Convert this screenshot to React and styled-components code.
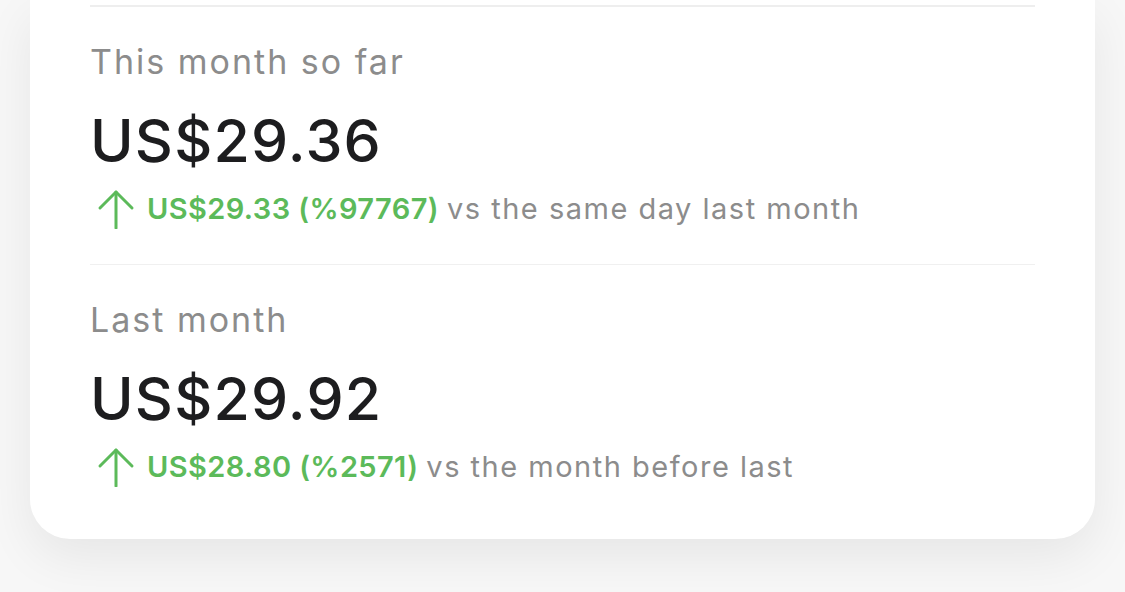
import styled, { createGlobalStyle } from "styled-components";

const GlobalStyle = createGlobalStyle`
  html, body {
    margin: 0;
    padding: 0;
    background: #f7f7f7;
  }
  body {
    font-family: Inter, "Noto Sans", sans-serif;
  }
`;

const Page = styled.div`
  width: 1125px;
  height: 592px;
  overflow: hidden;
  padding: 0 30px;
  box-sizing: border-box;
`;

const Card = styled.div`
  background: #ffffff;
  border-radius: 0 0 40px 40px;
  box-shadow: 0 18px 50px rgba(0, 0, 0, 0.07);
  padding: 5px 60px 52px;
`;

const Section = styled.section`
  border-top: ${(p) => (p.$strong ? "2px solid #eeeeee" : "1px solid #f0f0f0")};
  padding-top: 35px;
  padding-bottom: ${(p) => (p.$last ? "0" : "35px")};
`;

const Label = styled.div`
  font-size: 34px;
  line-height: 40px;
  letter-spacing: 2px;
  color: #8c8c8c;
`;

const Amount = styled.div`
  margin-top: 27px;
  font-size: 59px;
  line-height: 64px;
  font-weight: 500;
  letter-spacing: 1.2px;
  color: #1d1d1f;
`;

const Change = styled.div`
  margin-top: 16px;
  display: flex;
  align-items: center;
  gap: 12px;
  font-size: 29px;
  line-height: 40px;
  letter-spacing: 1.5px;
  color: #8c8c8c;
`;

const Delta = styled.span`
  font-weight: 600;
  letter-spacing: 0.4px;
  color: #5cba5a;
  margin-right: 8px;
`;

const ArrowUp = () => (
  <svg width="38" height="40" viewBox="0 0 38 40" fill="none" stroke="#5cba5a" strokeWidth="3" strokeLinecap="round" strokeLinejoin="round" style={{ marginLeft: 7, flexShrink: 0 }}>
    <path d="M3 19 L19 3 L35 19" />
    <path d="M19 3 V39" />
  </svg>
);

const rows = [
  { label: "This month so far", amount: "US$29.36", delta: "US$29.33 (%97767)", note: "vs the same day last month" },
  { label: "Last month", amount: "US$29.92", delta: "US$28.80 (%2571)", note: "vs the month before last" },
];

export default function App() {
  return (
    <>
      <GlobalStyle />
      <Page>
        <Card>
          {rows.map((r, i) => (
            <Section key={r.label} $strong={i === 0} $last={i === rows.length - 1}>
              <Label>{r.label}</Label>
              <Amount>{r.amount}</Amount>
              <Change>
                <ArrowUp />
                <span>
                  <Delta>{r.delta}</Delta>
                  {r.note}
                </span>
              </Change>
            </Section>
          ))}
        </Card>
      </Page>
    </>
  );
}
